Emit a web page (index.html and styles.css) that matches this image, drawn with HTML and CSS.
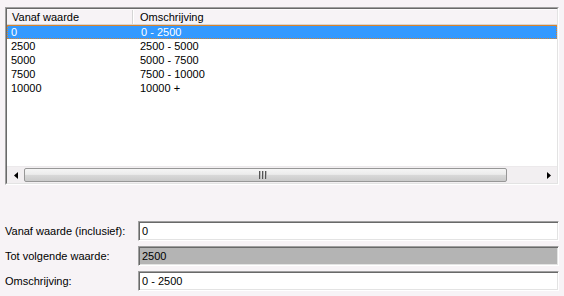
FILE: index.html
```html
<html>
  <head>
    <meta charset="UTF-8" />
    <title>Waarden</title>
    <link rel="stylesheet" href="styles.css">
  </head>
  <body>
    <div class="list">
      <div class="list-in">
        <div class="head">
          <div class="hcell c1">Vanaf waarde</div>
          <div class="hcell c2">Omschrijving</div>
        </div>
        <div class="rows">
          <div class="row selected"><span class="c1">0</span><span class="c2">0 - 2500</span></div>
          <div class="row"><span class="c1">2500</span><span class="c2">2500 - 5000</span></div>
          <div class="row"><span class="c1">5000</span><span class="c2">5000 - 7500</span></div>
          <div class="row"><span class="c1">7500</span><span class="c2">7500 - 10000</span></div>
          <div class="row"><span class="c1">10000</span><span class="c2">10000 +</span></div>
        </div>
        <div class="hscroll">
          <div class="sbtn">
            <svg width="4" height="7" viewBox="0 0 4 7"><path d="M4 0 L0 3.5 L4 7 Z" fill="#000"/></svg>
          </div>
          <div class="track">
            <div class="thumb">
              <svg width="8" height="8" viewBox="0 0 8 8">
                <rect x="0" y="0" width="2" height="8" fill="#555"/>
                <rect x="3" y="0" width="2" height="8" fill="#555"/>
                <rect x="6" y="0" width="2" height="8" fill="#555"/>
                <rect x="1" y="0" width="1" height="8" fill="#bbb"/>
                <rect x="4" y="0" width="1" height="8" fill="#bbb"/>
                <rect x="7" y="0" width="1" height="8" fill="#bbb"/>
              </svg>
            </div>
          </div>
          <div class="sbtn">
            <svg width="4" height="7" viewBox="0 0 4 7"><path d="M0 0 L4 3.5 L0 7 Z" fill="#000"/></svg>
          </div>
        </div>
      </div>
    </div>
    <div class="form">
      <div class="label">Vanaf waarde (inclusief):</div>
      <div class="field">0</div>
      <div class="label">Tot volgende waarde:</div>
      <div class="field readonly">2500</div>
      <div class="label">Omschrijving:</div>
      <div class="field">0 - 2500</div>
    </div>
  </body>
</html>
```

FILE: styles.css
```css
html, body {
  margin: 0; padding: 0;
  width: 564px; height: 296px; overflow: hidden;
}
body {
  background-color: #f7f3f6; color: #000;
  font-family: "Liberation Sans", Arial, sans-serif; font-size: 11px;
  padding: 7px 5px 0 5px; box-sizing: border-box;
}
.list {
  width: 554px; height: 178px; box-sizing: border-box;
  border: 1px solid; border-color: #a0a0a0 #ffffff #ffffff #a0a0a0;
}
.list-in {
  height: 100%; box-sizing: border-box;
  border: 1px solid; border-color: #696969 #e3e3e3 #e3e3e3 #696969;
  display: flex; flex-direction: column; background-color: #fff;
}
.head {
  height: 16px; box-sizing: border-box; display: flex;
  background-color: #f7f3f6; border-bottom: 1px solid #d5d5d5;
  border-top: 1px solid #fcfbfc;
}
.hcell { line-height: 14px; white-space: nowrap; }
.hcell.c1 {
  width: 126px; padding-left: 5px; box-sizing: border-box;
  border-right: 1px solid #d5d5d5; box-shadow: 1px 0 #fff;
}
.hcell.c2 { padding-left: 7px; }
.rows { flex: 1; background-color: #fff; }
.row { display: flex; height: 14px; line-height: 14px; box-sizing: border-box; }
.row .c1 { width: 126px; padding-left: 4px; box-sizing: border-box; }
.row .c2 { padding-left: 7px; }
.row.selected {
  background-color: #3399ff; color: #fff;
  border: 1px dotted #d9822b; border-top-style: solid; line-height: 12px;
}
.row.selected .c1 { padding-left: 3px; }
.hscroll {
  height: 17px; display: flex; box-sizing: border-box;
  background-color: #f2eff1; border-top: 1px solid #ece9eb;
}
.sbtn {
  width: 17px; display: flex; align-items: center; justify-content: center;
}
.track { flex: 1; display: flex; align-items: stretch; padding: 1px 33px 1px 0; }
.thumb {
  flex: 1; box-sizing: border-box;
  border: 1px solid #979797; border-radius: 2px;
  background: linear-gradient(#f5f5f5, #ececec 45%, #d9d9d9 52%, #cacaca);
  display: flex; align-items: center; justify-content: center;
}
.thumb svg { margin-right: 6px; }
.form {
  margin-top: 36px;
  display: grid; grid-template-columns: 133px 421px;
  grid-auto-rows: 20px; row-gap: 5px;
}
.label { display: flex; align-items: center; white-space: nowrap; }
.field {
  box-sizing: border-box; background-color: #fff;
  border: 1px solid; border-color: #a0a0a0 #ffffff #ffffff #a0a0a0;
  box-shadow: inset 1px 1px #696969, inset -1px -1px #e3e3e3;
  padding-left: 3px; display: flex; align-items: center;
}
.field.readonly { background-color: #b4b4b4; }
```
